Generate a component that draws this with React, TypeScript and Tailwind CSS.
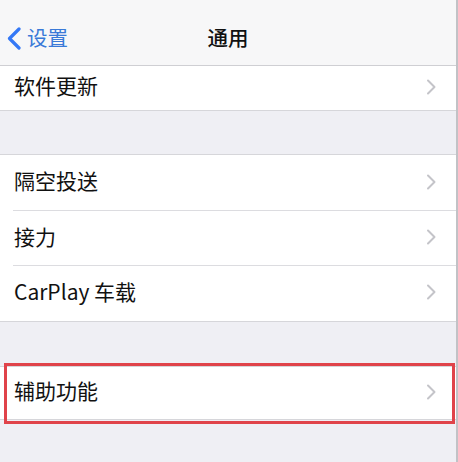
import React from "react";

const Chevron = () => (
  <svg width="11" height="16" viewBox="0 0 11 16" className="shrink-0">
    <path d="M2 1.5 L8.5 8 L2 14.5" fill="none" stroke="#c4c4c9" strokeWidth="2" strokeLinecap="round" strokeLinejoin="round" />
  </svg>
);

const Row = ({ label, h, inset }: { label: string; h: string; inset?: boolean }) => (
  <div className={`relative flex items-center bg-white pl-[14px] pr-[19px] ${h}`}>
    <span className="flex-1 text-[21px] text-[#111] leading-none pb-[5px]">{label}</span>
    <span className="pb-[3px]"><Chevron /></span>
    {inset && <div className="absolute bottom-0 left-[13px] right-0 h-px bg-[#dcdce0]" />}
  </div>
);

export default function App() {
  return (
    <div
      className="relative w-[458px] h-[462px] overflow-hidden bg-[#efeff4] border-r-2 border-[#c2c2c6]"
      style={{ fontFamily: '"Noto Sans CJK SC", "Noto Sans", sans-serif' }}
    >
      <div className="h-[66px] bg-[#f7f7f8] border-b border-[#cfcfd3] flex items-center relative pt-[12px]">
        <div className="flex items-center pl-[6px] text-[#3a7ad8]">
          <svg width="16" height="23" viewBox="0 0 16 23">
            <path d="M13 2 L3.5 11.5 L13 21" fill="none" stroke="#3478f6" strokeWidth="3.2" strokeLinecap="round" strokeLinejoin="round" />
          </svg>
          <span className="ml-[5px] text-[20.5px] leading-none pb-[3px]">设置</span>
        </div>
        <div className="absolute left-0 right-0 top-[27px] text-center text-[20.5px] font-medium text-[#111] leading-none">通用</div>
      </div>
      <div className="border-b border-[#d6d6da]">
        <Row label="软件更新" h="h-[44px]" />
      </div>
      <div className="h-[43px]" />
      <div className="border-t border-b border-[#d6d6da]">
        <Row label="隔空投送" h="h-[56px]" inset />
        <Row label="接力" h="h-[55px]" inset />
        <Row label="CarPlay 车载" h="h-[55px]" />
      </div>
      <div className="h-[44px]" />
      <div className="border-t border-b border-[#d6d6da]">
        <Row label="辅助功能" h="h-[52px]" />
      </div>
      <div className="absolute left-[4px] top-[363px] w-[451px] h-[61px] border-[3px] border-[#e0434a]" />
    </div>
  );
}
